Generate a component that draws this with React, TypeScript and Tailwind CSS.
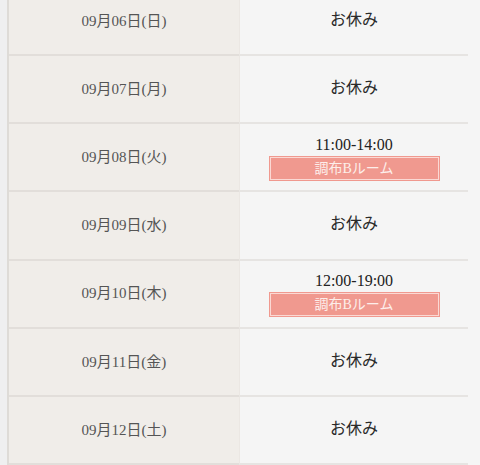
import React from 'react';

type Day = {
  date: string;
  time?: string;
  room?: string;
};

const days: Day[] = [
  { date: '09月06日(日)' },
  { date: '09月07日(月)' },
  { date: '09月08日(火)', time: '11:00-14:00', room: '調布Bルーム' },
  { date: '09月09日(水)' },
  { date: '09月10日(木)', time: '12:00-19:00', room: '調布Bルーム' },
  { date: '09月11日(金)' },
  { date: '09月12日(土)' },
];

const serif = { fontFamily: '"Liberation Serif", "Noto Sans CJK JP", serif' };

function Row({ day }: { day: Day }) {
  return (
    <div className="flex h-[68.6px]">
      <div className="w-[230px] flex items-center justify-center bg-[#f0ede9] border-b-2 border-[#e2deda] text-[15px] text-[#555]">
        {day.date}
      </div>
      <div className="w-[229px] flex flex-col items-center justify-center border-b-2 border-[#e6e4e2] border-l border-l-[#ebe7e3]">
        {day.time ? (
          <>
            <div className="text-[16px] leading-[21px] text-[#222]">{day.time}</div>
            <div className="mt-[1px] w-[171px] h-[25px] bg-[#f0998f] p-[1px]">
              <div className="h-full border border-[#fbd9d4] flex items-center justify-center text-[14px] text-[#fdeeea]">
                {day.room}
              </div>
            </div>
          </>
        ) : (
          <div className="text-[16px] text-[#2a2a2a] pb-[2px]">お休み</div>
        )}
      </div>
    </div>
  );
}

export default function App() {
  return (
    <div className="w-[480px] h-[465px] overflow-hidden bg-[#f5f5f5] flex" style={serif}>
      <div className="w-[9px] bg-[#efeff0] border-r-2 border-[#dedbd7]" />
      <div className="-mt-[12px] flex flex-col">
        {days.map((d) => (
          <Row key={d.date} day={d} />
        ))}
      </div>
    </div>
  );
}
